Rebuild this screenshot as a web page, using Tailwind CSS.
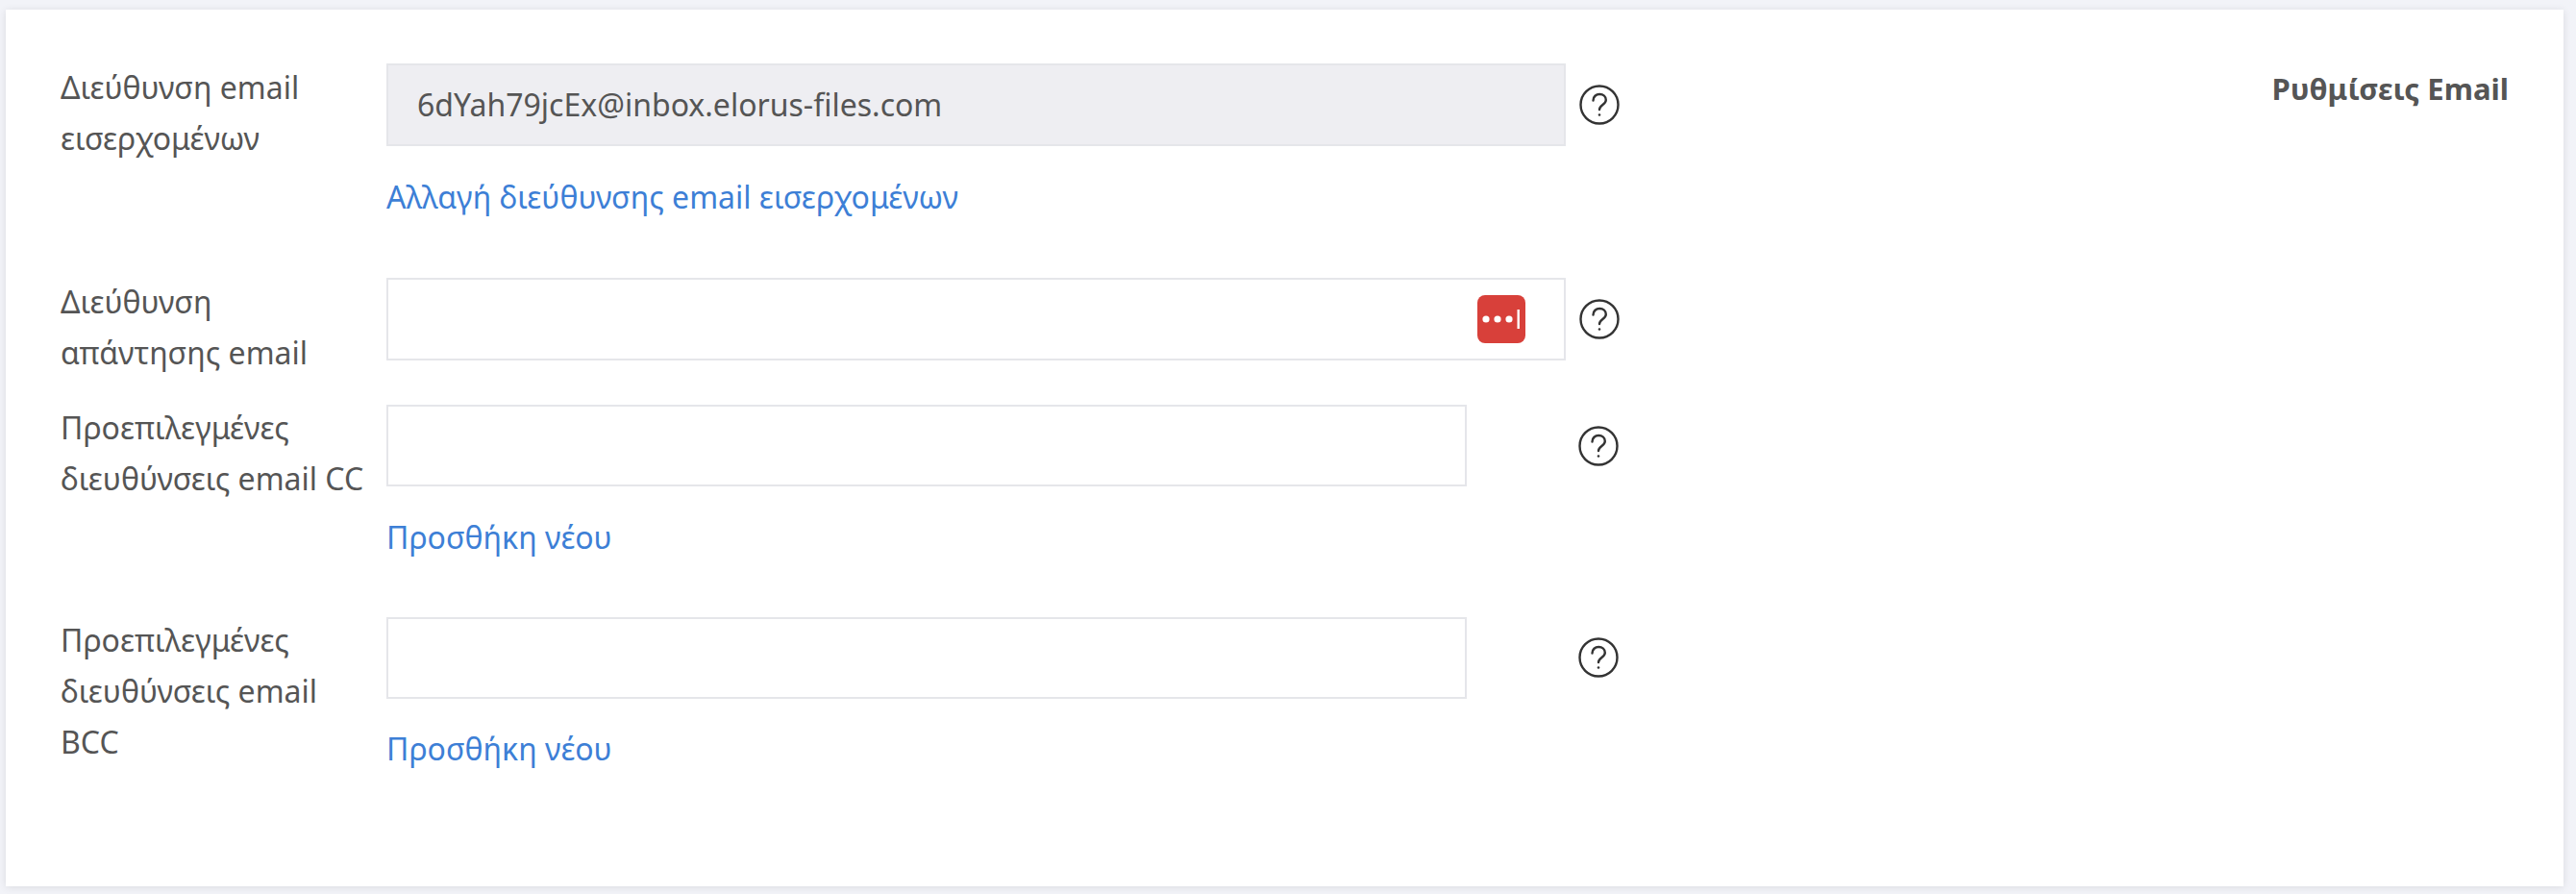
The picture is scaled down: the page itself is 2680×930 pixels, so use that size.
<!DOCTYPE html>
<html lang="en">

<head>
    <meta charset="UTF-8">
    <title>Ρυθμίσεις Email</title>
    <script src="https://cdn.jsdelivr.net/npm/@tailwindcss/browser@4"></script>
</head>

<body class="h-[930px] overflow-hidden bg-[#f2f3f8] font-['Noto_Sans',sans-serif] text-[32px] leading-[52px] text-[#555]">
    <div class="mx-[13px] ml-[6px] mt-[10px] flex h-[912px] bg-white pl-[57px] pr-[57px] pt-[56px] shadow-[0_1px_8px_rgba(0,0,0,0.1)]">
        <div class="flex-1">
            <!-- incoming address -->
            <div class="flex h-[223px]">
                <div class="-mt-[2px] w-[339px] shrink-0 leading-[53px]">Διεύθυνση email<br>εισερχομένων</div>
                <div class="w-[1227px]">
                    <div class="flex h-[86px] items-center border-2 border-[#e5e6ea] bg-[#eeeef2] pl-[30px]">6dYah79jcEx@inbox.elorus-files.com</div>
                    <a class="mt-[27px] block text-[#3d7fd6]">Αλλαγή διεύθυνσης email εισερχομένων</a>
                </div>
                <svg class="ml-[14px] mt-[22px] size-[42px]" viewBox="0 0 42 42" fill="none" stroke="#333" stroke-width="2.4" stroke-linecap="round"><circle cx="21" cy="21" r="19.5"/><path d="M14.5 16.5c0-4 3-6.5 6.7-6.5s6.6 2.400 6.600 6c0 5-6.800 5-6.800 10"/><circle cx="21" cy="31.500" r="1.300" fill="#333" stroke="none"/></svg>
            </div>
            <!-- reply to -->
            <div class="flex h-[132px]">
                <div class="-mt-[2px] w-[339px] shrink-0 leading-[53px]">Διεύθυνση<br>απάντησης email</div>
                <div class="flex h-[86px] w-[1227px] items-center justify-end border-2 border-[#e5e6ea] pr-[40px]">
                    <svg class="size-[50px]" viewBox="0 0 50 50"><rect width="50" height="50" rx="8" fill="#d8403a"/><g fill="#fff"><circle cx="9" cy="25" r="3.600"/><circle cx="21" cy="25" r="3.600"/><circle cx="33" cy="25" r="3.600"/><rect x="41.500" y="15" width="2.400" height="20"/></g></svg>
                </div>
                <svg class="ml-[14px] mt-[22px] size-[42px]" viewBox="0 0 42 42" fill="none" stroke="#333" stroke-width="2.4" stroke-linecap="round"><circle cx="21" cy="21" r="19.5"/><path d="M14.5 16.5c0-4 3-6.5 6.7-6.5s6.6 2.400 6.600 6c0 5-6.800 5-6.800 10"/><circle cx="21" cy="31.500" r="1.300" fill="#333" stroke="none"/></svg>
            </div>
            <!-- default cc -->
            <div class="flex h-[221px]">
                <div class="-mt-[3px] w-[339px] shrink-0 leading-[53px]">Προεπιλεγμένες<br>διευθύνσεις email CC</div>
                <div class="w-[1124px]">
                    <div class="h-[85px] border-2 border-[#e5e6ea]"></div>
                    <a class="mt-[27px] block text-[#3d7fd6]">Προσθήκη νέου</a>
                </div>
                <svg class="ml-[116px] mt-[22px] size-[42px]" viewBox="0 0 42 42" fill="none" stroke="#333" stroke-width="2.4" stroke-linecap="round"><circle cx="21" cy="21" r="19.5"/><path d="M14.5 16.5c0-4 3-6.5 6.7-6.5s6.6 2.400 6.600 6c0 5-6.800 5-6.800 10"/><circle cx="21" cy="31.500" r="1.300" fill="#333" stroke="none"/></svg>
            </div>
            <!-- default bcc -->
            <div class="flex">
                <div class="-mt-[3px] w-[339px] shrink-0 leading-[53px]">Προεπιλεγμένες<br>διευθύνσεις email<br>BCC</div>
                <div class="w-[1124px]">
                    <div class="h-[85px] border-2 border-[#e5e6ea]"></div>
                    <a class="mt-[26px] block text-[#3d7fd6]">Προσθήκη νέου</a>
                </div>
                <svg class="ml-[116px] mt-[21px] size-[42px]" viewBox="0 0 42 42" fill="none" stroke="#333" stroke-width="2.4" stroke-linecap="round"><circle cx="21" cy="21" r="19.5"/><path d="M14.5 16.5c0-4 3-6.5 6.7-6.5s6.6 2.400 6.600 6c0 5-6.800 5-6.800 10"/><circle cx="21" cy="31.500" r="1.300" fill="#333" stroke="none"/></svg>
            </div>
        </div>
        <div class="whitespace-nowrap text-[31px] font-bold">Ρυθμίσεις Email</div>
    </div>
</body>

</html>
